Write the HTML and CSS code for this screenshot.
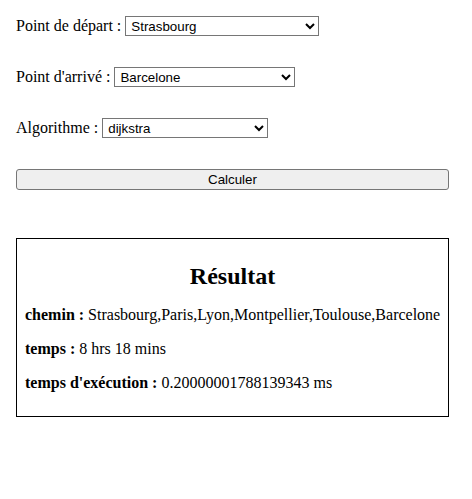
FILE: index.html
```html
<!DOCTYPE html>
<html lang="fr">
<head>
<meta charset="utf-8">
<link rel="stylesheet" href="styles.css">
</head>
<body>
<div class="page">
  <form class="form">
    <div class="row">
      <label class="label">Point de départ :</label>
      <select class="sel sel-start"><option>Strasbourg</option></select>
    </div>
    <div class="row">
      <label class="label">Point d'arrivé :</label>
      <select class="sel sel-end"><option>Barcelone</option></select>
    </div>
    <div class="row">
      <label class="label">Algorithme :</label>
      <select class="sel sel-algo"><option>dijkstra</option></select>
    </div>
    <button type="button" class="btn">Calculer</button>
  </form>
  <div class="result">
    <h2 class="title">Résultat</h2>
    <p class="line"><b>chemin :</b> Strasbourg,Paris,Lyon,Montpellier,Toulouse,Barcelone</p>
    <p class="line"><b>temps :</b> 8 hrs 18 mins</p>
    <p class="line"><b>temps d'exécution :</b> 0.20000001788139343 ms</p>
  </div>
</div>
</body>
</html>
```

FILE: styles.css
```css
html, body {
  background: #fff;
}
body {
  margin: 8px;
  font-family: "Liberation Serif", "Times New Roman", serif;
  font-size: 16px;
  color: #000;
}
.page {
  padding: 8px 0 0 8px;
  width: 433px;
}
.form {
  margin: 0;
}
.row {
  margin-bottom: 31px;
}
.label {
  font-size: 16px;
}
.sel {
  font-family: "Liberation Sans", Arial, sans-serif;
  font-size: 13.33px;
  height: 20px;
  box-sizing: border-box;
  border: 1px solid #767676;
  border-radius: 0;
  background: #fff;
  color: #000;
  padding: 0 0 0 1px;
}
.sel-start { width: 194px; }
.sel-end { width: 181px; }
.sel-algo { width: 166px; }
.btn {
  display: block;
  width: 433px;
  height: 21px;
  margin: 0;
  font-family: "Liberation Sans", Arial, sans-serif;
  font-size: 13.33px;
  background: #efefef;
  border: 1px solid #767676;
  border-radius: 3px;
  color: #000;
  padding: 1px 6px;
}
.result {
  margin-top: 48px;
  border: 1px solid #000;
  padding: 8px;
}
.title {
  text-align: center;
  font-size: 24px;
  margin: 16px 0 15px;
}
.line {
  margin: 16px 0;
  white-space: nowrap;
}
```
